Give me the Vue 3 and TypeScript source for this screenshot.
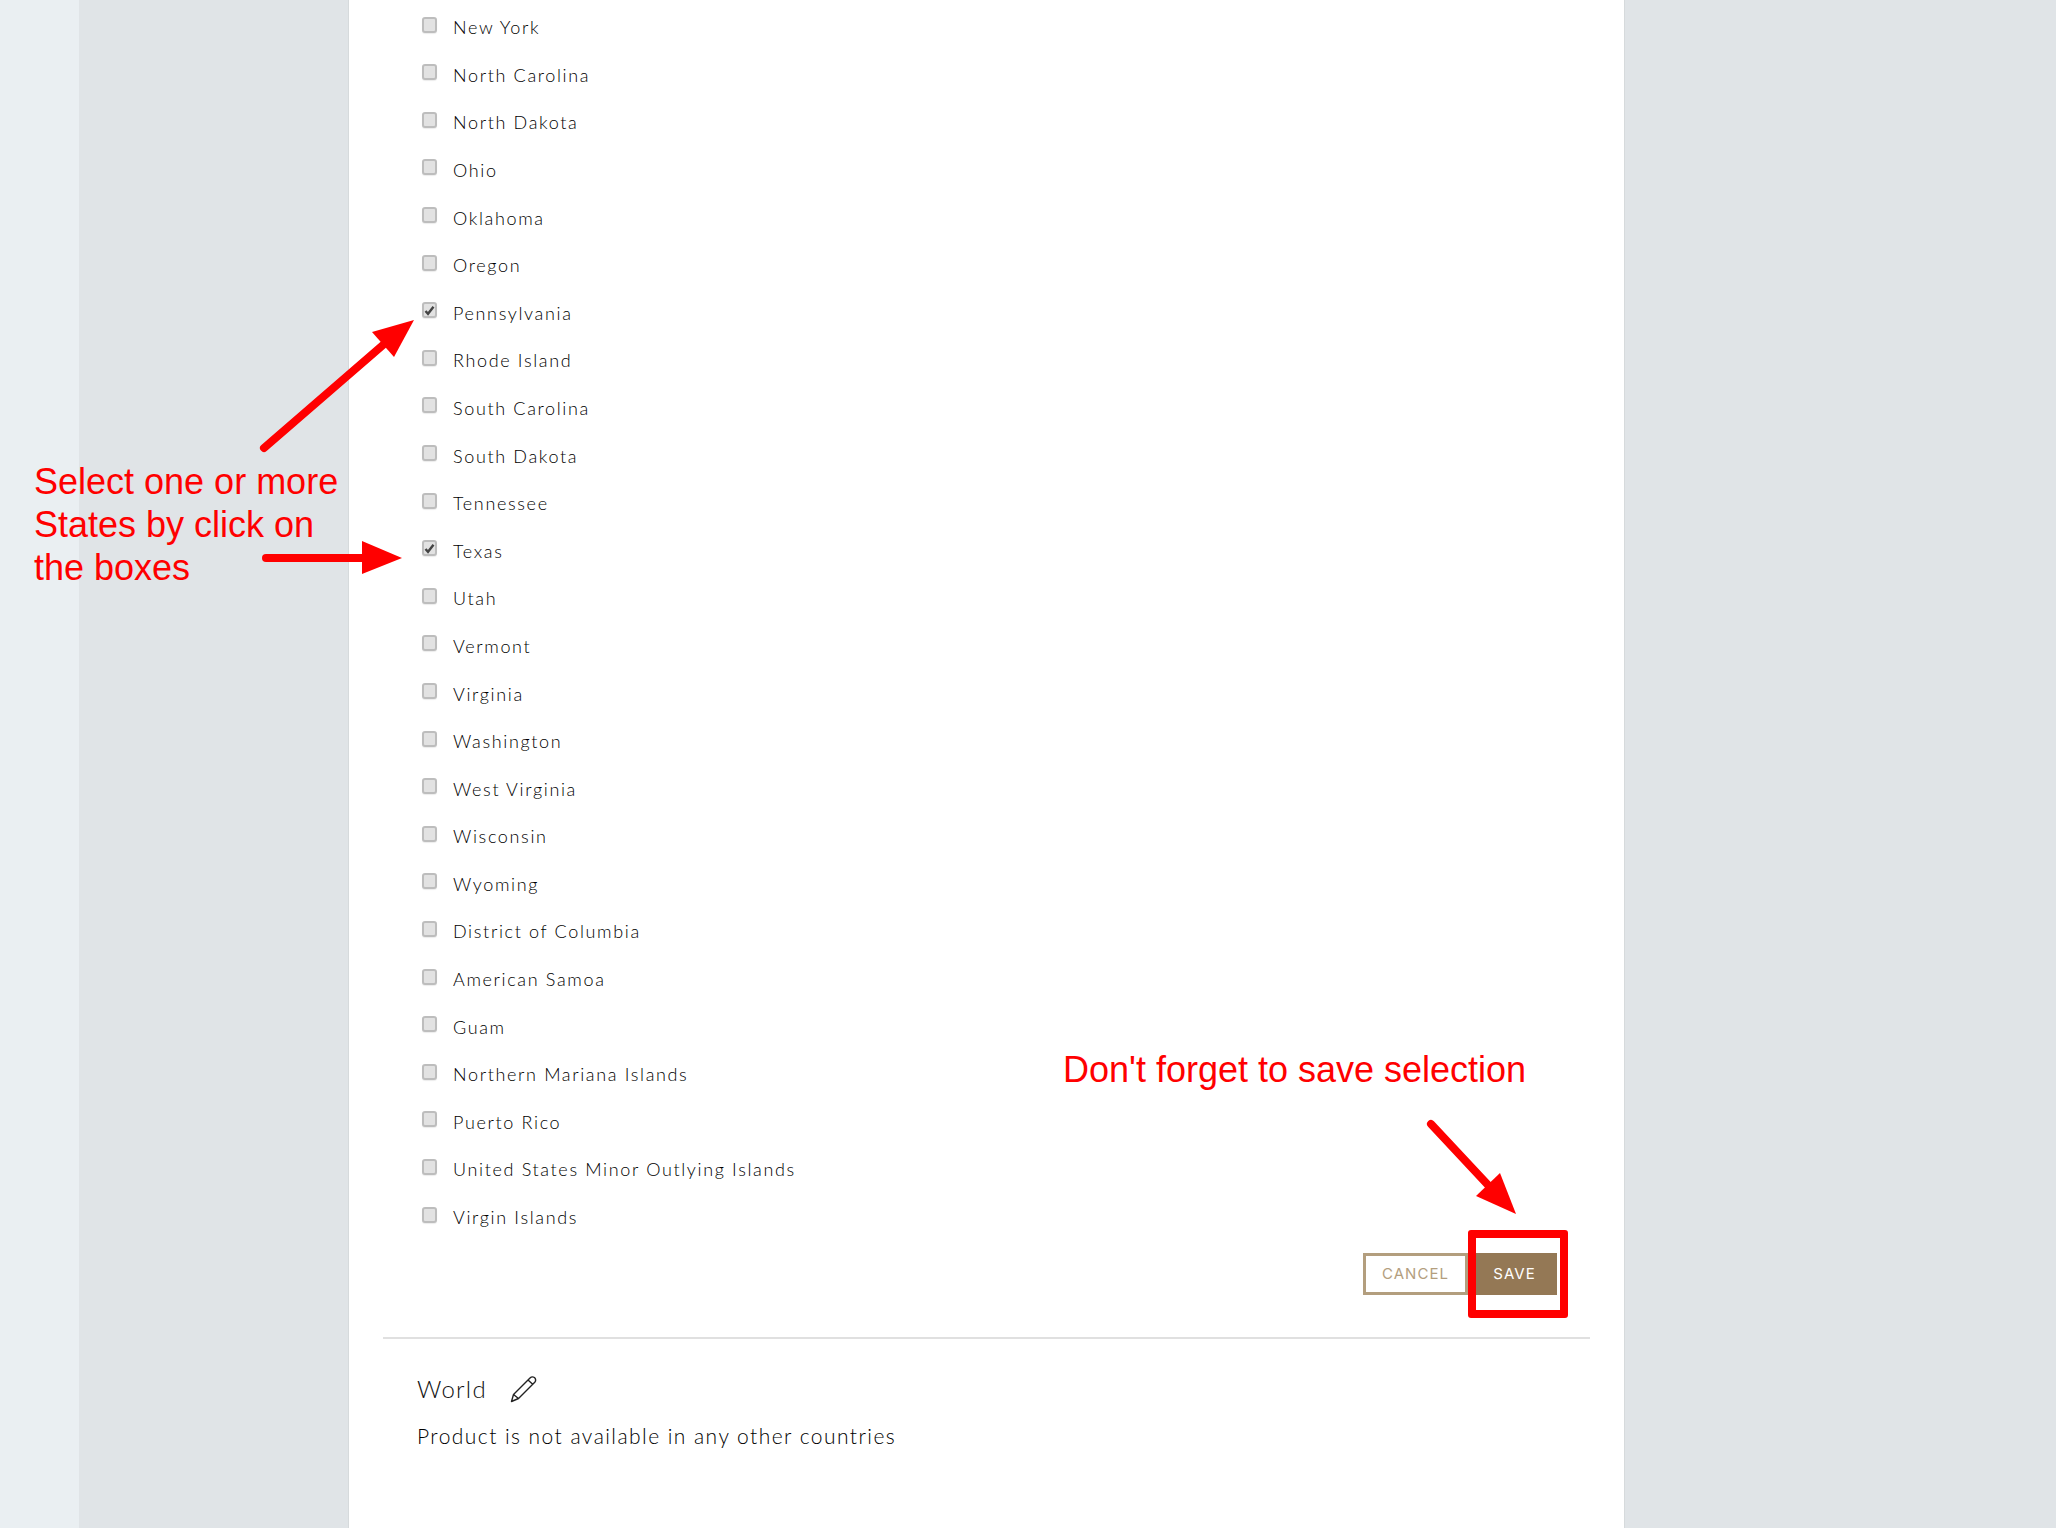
<script setup lang="ts">
interface StateRow { name: string; checked: boolean }
const checkedNames = ['Pennsylvania', 'Texas']
const names = ['New York','North Carolina','North Dakota','Ohio','Oklahoma','Oregon','Pennsylvania','Rhode Island','South Carolina','South Dakota','Tennessee','Texas','Utah','Vermont','Virginia','Washington','West Virginia','Wisconsin','Wyoming','District of Columbia','American Samoa','Guam','Northern Mariana Islands','Puerto Rico','United States Minor Outlying Islands','Virgin Islands']
const states: StateRow[] = names.map((name) => ({ name, checked: checkedNames.includes(name) }))
</script>

<template>
  <div class="page">
    <div class="strip"></div>
    <div class="gutter"></div>
    <main class="panel">
      <ul class="list">
        <li v-for="s in states" :key="s.name" class="row">
          <span class="box">
            <svg v-if="s.checked" width="11" height="11" viewBox="0 0 11 11"><path d="M1.5 6 L4 8.8 L9.5 1.8" fill="none" stroke="#444" stroke-width="2.4"/></svg>
          </span>
          <span class="name">{{ s.name }}</span>
        </li>
      </ul>
      <div class="actions">
        <button class="btn cancel">CANCEL</button>
        <button class="btn save">SAVE</button>
      </div>
      <hr class="divider" />
      <section class="world">
        <div class="world-head">
          <span class="world-title">World</span>
          <svg class="pencil" width="27" height="28" viewBox="0 0 27 28">
            <path d="M1.5 26.5 L3.5 19.5 L20 3 Q22 1 24.5 2.5 Q26.5 4.5 25 7 L8.5 23.5 Z M3.5 19.5 L8.5 23.5 M18 5 L23 9.5" fill="none" stroke="#222" stroke-width="1.4" stroke-linejoin="round"/>
          </svg>
        </div>
        <p class="world-text">Product is not available in any other countries</p>
      </section>
    </main>
    <div class="gutter-right"></div>

    <svg class="arrows" width="2056" height="1528" viewBox="0 0 2056 1528">
      <g stroke="#ff0000" stroke-width="8" stroke-linecap="round" fill="none">
        <path d="M264 448 L383 345" />
        <path d="M266 558 L365 558" />
        <path d="M1431 1124 L1488 1185" />
      </g>
      <g fill="#ff0000">
        <path d="M414 320 L372 332 L394 357 Z" />
        <path d="M402 558 L362 541 L362 574 Z" />
        <path d="M1516 1214 L1500 1173 L1476 1196 Z" />
      </g>
    </svg>
    <div class="note note-left">Select one or more<br />States by click on<br />the boxes</div>
    <div class="note note-save">Don't forget to save selection</div>
    <div class="highlight"></div>
  </div>
</template>

<style>
html, body { margin: 0; background: #fff; }
</style>

<style scoped>
.page {
  position: relative;
  display: flex;
  width: 2056px;
  height: 1528px;
  overflow: hidden;
  font-family: "Lato", "Liberation Sans", sans-serif;
  color: #333;
}
.strip { width: 79px; background: #eaeff2; }
.gutter { width: 269px; background: #e0e4e7; }
.gutter-right { flex: 1; background: #e0e4e7; }
.panel {
  width: 1277px;
  box-sizing: border-box;
  background: #fff;
  border-left: 1px solid #d6dadc;
  border-right: 1px solid #d6dadc;
  padding-top: 3.4px;
}
.list { list-style: none; margin: 0; padding: 0 0 0 73px; }
.row {
  display: flex;
  align-items: center;
  height: 47.6px;
}
.box {
  box-sizing: border-box;
  width: 15px;
  height: 16px;
  margin-top: -5px;
  margin-right: 16px;
  background: #e2e2e2;
  border: 2px solid #bdbdbd;
  border-radius: 3px;
  box-shadow: 0 1px 1px rgba(0,0,0,.08);
  display: flex;
  align-items: center;
  justify-content: center;
}
.name {
  font-size: 18px;
  letter-spacing: 1.65px;
  font-weight: 300;
  color: #000;
}
.actions {
  display: flex;
  justify-content: flex-end;
  margin-top: 11.8px;
  padding-right: 67px;
}
.btn {
  height: 42px;
  box-sizing: border-box;
  font-family: "Inter", "Open Sans", sans-serif;
  font-size: 15px;
  font-weight: 400;
  letter-spacing: 1px;
  border-radius: 0;
  padding: 0;
  cursor: pointer;
}
.cancel {
  width: 105px;
  background: #fff;
  border: 3px solid #b39e7e;
  color: #b39e7e;
}
.save {
  width: 89px;
  padding-left: 4px;
  background: #947855;
  border: 0;
  color: #fff;
}
.divider {
  height: 2px;
  border: 0;
  margin: 42px 34px 0 34px;
  background: #e0e0e0;
}
.world { padding: 35px 0 0 68px; }
.world-head {
  display: flex;
  align-items: center;
  gap: 23px;
  height: 30px;
}
.world-title {
  font-size: 24px;
  font-weight: 300;
  letter-spacing: 1.25px;
  color: #111;
}
.world-text {
  margin: 19px 0 0;
  font-size: 21px;
  font-weight: 300;
  letter-spacing: 1.45px;
  color: #000;
}
.arrows { position: absolute; left: 0; top: 0; pointer-events: none; }
.note {
  position: absolute;
  font-family: "Liberation Sans", Arial, sans-serif;
  font-size: 36px;
  line-height: 43px;
  color: #ff0000;
  white-space: nowrap;
}
.note-left { left: 34px; top: 460px; }
.note-save { left: 1063px; top: 1048px; }
.highlight {
  position: absolute;
  left: 1468px;
  top: 1230px;
  width: 100px;
  height: 88px;
  box-sizing: border-box;
  border: 8px solid #ff0000;
  border-radius: 3px;
}
</style>
